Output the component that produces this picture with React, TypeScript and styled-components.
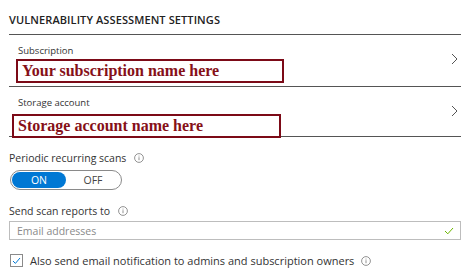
import React, { useState } from "react";
import styled, { createGlobalStyle } from "styled-components";

const GlobalStyle = createGlobalStyle`
  html, body {
    margin: 0;
    padding: 0;
    background: #ffffff;
  }
  body {
    font-family: "Open Sans", "Noto Sans", sans-serif;
    color: #323130;
  }
`;

const Page = styled.div`
  width: 476px;
  height: 275px;
  padding: 0 15px 0 9px;
  box-sizing: border-box;
  display: flex;
  flex-direction: column;
  overflow: hidden;
`;

const Title = styled.div`
  height: 35px;
  padding-top: 12px;
  box-sizing: border-box;
  font-size: 11px;
  font-weight: 600;
  letter-spacing: 0.1px;
  color: #222;
  border-bottom: 1px solid #555;
`;

const PickerRow = styled.div<{ $height: number }>`
  height: ${({ $height }) => $height}px;
  box-sizing: border-box;
  border-bottom: 1px solid #555;
  display: flex;
  align-items: flex-start;
  justify-content: space-between;
  padding: 9px 3px 0 9px;
`;

const PickerBody = styled.div`
  display: flex;
  flex-direction: column;
`;

const FieldLabel = styled.div`
  font-size: 9.5px;
  color: #333;
  line-height: 13px;
`;

const NameBox = styled.div<{ $offset: number; $shift: number; $width: number }>`
  margin-top: ${({ $offset }) => $offset}px;
  margin-left: ${({ $shift }) => $shift}px;
  width: ${({ $width }) => $width}px;
  height: 24px;
  box-sizing: border-box;
  border: 2px solid #7c0a17;
  padding: 0 0 0 4px;
  display: flex;
  align-items: center;
  font-family: "Liberation Serif", "Times New Roman", serif;
  font-weight: 700;
  font-size: 16px;
  color: #861018;
`;

const Chevron = styled.svg`
  margin-top: 9px;
  flex: none;
`;

const Section = styled.div<{ $top: number }>`
  margin-top: ${({ $top }) => $top}px;
`;

const LabelLine = styled.div`
  display: flex;
  align-items: center;
  gap: 8px;
  font-size: 10.5px;
  color: #333;
  line-height: 14px;
`;

const InfoIcon = () => (
  <svg width="10" height="10" viewBox="0 0 10 10">
    <circle cx="5" cy="5" r="4.4" fill="none" stroke="#777" strokeWidth="0.8" />
    <rect x="4.6" y="4.2" width="0.8" height="3" fill="#777" />
    <rect x="4.6" y="2.6" width="0.8" height="0.9" fill="#777" />
  </svg>
);

const Toggle = styled.div`
  margin-top: 5px;
  margin-left: 1px;
  width: 112px;
  height: 20px;
  box-sizing: border-box;
  border: 1px solid #8a8a8a;
  border-radius: 10px;
  display: flex;
  align-items: stretch;
  padding: 1px;
`;

const ToggleOption = styled.div<{ $active: boolean }>`
  flex: 1;
  border-radius: 9px;
  display: flex;
  align-items: center;
  justify-content: center;
  font-size: 10.5px;
  color: ${({ $active }) => ($active ? "#ffffff" : "#444")};
  background: ${({ $active }) => ($active ? "#0078d4" : "transparent")};
  cursor: pointer;
`;

const EmailInput = styled.div`
  margin-top: 3px;
  height: 19px;
  box-sizing: border-box;
  border: 1px solid #bdbdbd;
  display: flex;
  align-items: center;
  justify-content: space-between;
  padding: 0 6px 0 7px;
  font-size: 10.5px;
  color: #8a8a8a;
`;

const CheckRow = styled.div`
  margin-top: 13px;
  display: flex;
  align-items: center;
  gap: 7px;
  font-size: 11px;
  color: #333;
`;

const CheckBox = styled.div`
  width: 13px;
  height: 13px;
  box-sizing: border-box;
  border: 1px solid #8a8a8a;
  margin-left: 1px;
  display: flex;
  align-items: center;
  justify-content: center;
  flex: none;
`;

const RightArrow = () => (
  <Chevron width="7" height="12" viewBox="0 0 7 12">
    <path d="M1 1 L6 6 L1 11" fill="none" stroke="#555" strokeWidth="1" />
  </Chevron>
);

export default function App() {
  const [on, setOn] = useState(true);
  return (
    <Page>
      <GlobalStyle />
      <Title>VULNERABILITY ASSESSMENT SETTINGS</Title>
      <PickerRow $height={52}>
        <PickerBody>
          <FieldLabel>Subscription</FieldLabel>
          <NameBox $offset={2} $shift={-2} $width={268}>
            Your subscription name here
          </NameBox>
        </PickerBody>
        <RightArrow />
      </PickerRow>
      <PickerRow $height={50}>
        <PickerBody>
          <FieldLabel>Storage account</FieldLabel>
          <NameBox $offset={5} $shift={-6} $width={269}>
            Storage account name here
          </NameBox>
        </PickerBody>
        <RightArrow />
      </PickerRow>
      <Section $top={14}>
        <LabelLine>
          Periodic recurring scans <InfoIcon />
        </LabelLine>
        <Toggle>
          <ToggleOption $active={on} onClick={() => setOn(true)}>
            ON
          </ToggleOption>
          <ToggleOption $active={!on} onClick={() => setOn(false)}>
            OFF
          </ToggleOption>
        </Toggle>
      </Section>
      <Section $top={14}>
        <LabelLine>
          Send scan reports to <InfoIcon />
        </LabelLine>
        <EmailInput>
          Email addresses
          <svg width="10" height="8" viewBox="0 0 10 8">
            <path d="M1 4 L3.8 6.8 L9 1" fill="none" stroke="#6bb700" strokeWidth="1" />
          </svg>
        </EmailInput>
      </Section>
      <CheckRow>
        <CheckBox>
          <svg width="9" height="8" viewBox="0 0 9 8">
            <path d="M1 4 L3.4 6.4 L8 1" fill="none" stroke="#0078d4" strokeWidth="1" />
          </svg>
        </CheckBox>
        Also send email notification to admins and subscription owners
        <InfoIcon />
      </CheckRow>
    </Page>
  );
}
